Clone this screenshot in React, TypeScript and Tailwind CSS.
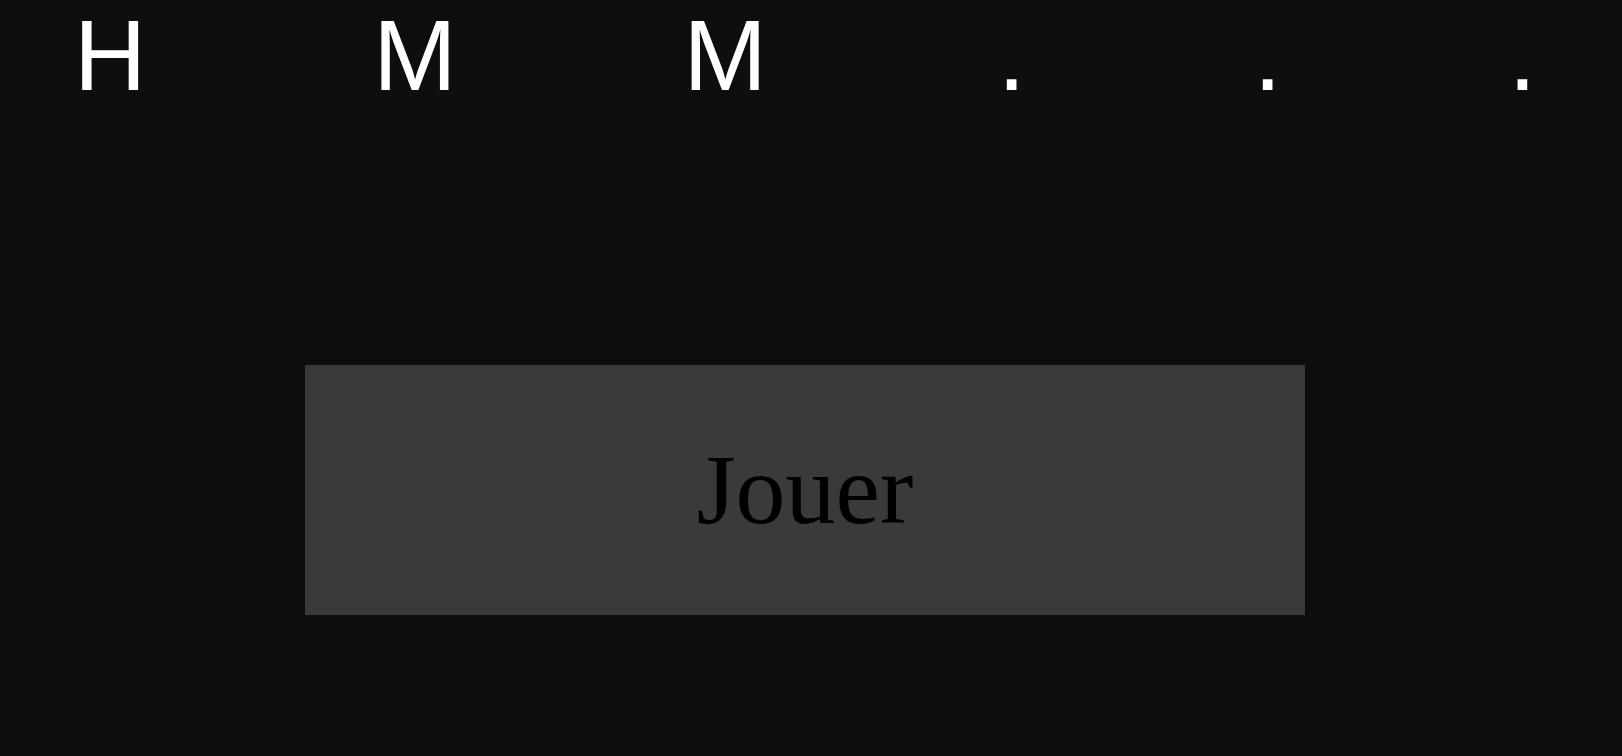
import React from "react";

export default function App() {
  return (
    <div className="w-[1622px] h-[756px] bg-[#0e0e0e] overflow-hidden">
      <div className="flex pl-[74px] pt-[5px] text-white text-[100px] leading-[100px] font-['Liberation_Sans',Arial,sans-serif]">
        <span>H</span>
        <span className="ml-[227px]">M</span>
        <span className="ml-[227px]">M</span>
        <span className="ml-[231px]">.</span>
        <span className="ml-[228px]">.</span>
        <span className="ml-[227px]">.</span>
      </div>
      <button className="mt-[260px] ml-[305px] w-[1000px] h-[250px] bg-[#3a3a3a] text-black text-[100px] flex items-center justify-center font-['Liberation_Serif','Times_New_Roman',serif]">
        Jouer
      </button>
    </div>
  );
}
